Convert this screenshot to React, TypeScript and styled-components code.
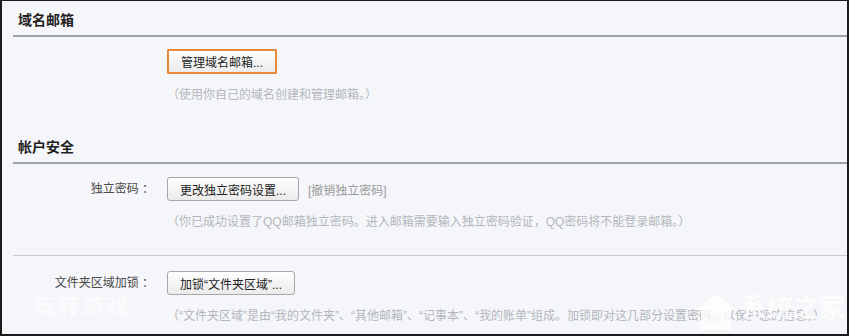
import * as React from 'react'
import styled, { createGlobalStyle } from 'styled-components'

const GlobalStyle = createGlobalStyle`
    body {
        margin: 0;
        font-family: 'Liberation Sans', 'Noto Sans CJK SC', sans-serif;
        font-size: 12px;
        color: #333;
    }
`

const Frame = styled.div`
    position: relative;
    box-sizing: border-box;
    width: 849px;
    height: 336px;
    overflow: hidden;
    background: #f5f6f9;
    border-style: solid;
    border-color: #1b1b1b;
    border-width: 1px 2px 2px 2px;
    padding-top: 9px;
`

const SectionTitle = styled.div`
    margin-left: 11px;
    padding: 0 0 5px 5px;
    font-size: 14px;
    font-weight: bold;
    line-height: 20px;
    color: #1f1f1f;
    border-bottom: 2px solid #a1a5ab;
    box-shadow: 0 1px 0 #eef1f7;
`

const SectionBody = styled.div<{ top: number; bottom: number }>`
    padding: ${p => p.top}px 0 ${p => p.bottom}px 0;
`

const Row = styled.div`
    display: grid;
    grid-template-columns: 152px auto;
    column-gap: 13px;
    align-items: center;
`

const Label = styled.div`
    text-align: right;
    color: #4a4a4a;
    line-height: 24px;
`

const Controls = styled.div`
    display: flex;
    align-items: center;
    gap: 9px;
`

const Button = styled.button<{ focused?: boolean }>`
    box-sizing: border-box;
    height: ${p => p.focused ? 25 : 24}px;
    padding: 0 12px;
    font-family: inherit;
    font-size: 12px;
    color: #222;
    background: linear-gradient(#fefefe, #ebebeb);
    border: ${p => p.focused ? '2px solid #e8893b' : '1px solid #a6a8ab'};
    border-radius: ${p => p.focused ? 1 : 3}px;
    cursor: pointer;
`

const Link = styled.span`
    color: #9a9a9a;
`

const Hint = styled.div`
    grid-column: 2;
    margin-top: 12px;
    line-height: 18px;
    color: #b3b7bc;
    white-space: nowrap;
`

const Divider = styled.div`
    margin-left: 11px;
    border-top: 1px solid #c7cacf;
    box-shadow: 0 2px 0 #eef2f8;
`

const WatermarkLeft = styled.div`
    position: absolute;
    left: 32px;
    top: 291px;
    font-family: 'Noto Sans CJK SC', sans-serif;
    font-size: 22px;
    line-height: 24px;
    font-weight: bold;
    letter-spacing: 2px;
    color: rgba(255, 255, 255, 0.6);
`

const WatermarkRight = styled.div`
    position: absolute;
    right: 2px;
    top: 291px;
    display: flex;
    align-items: flex-start;
    gap: 2px;
    color: rgba(255, 255, 255, 0.75);
`

const BrandText = styled.div`
    display: flex;
    flex-direction: column;
    font-family: 'Noto Sans CJK SC', sans-serif;
    font-size: 26px;
    font-weight: bold;
    line-height: 28px;
    & small {
        font-family: 'Liberation Sans', sans-serif;
        font-size: 8px;
        line-height: 10px;
        letter-spacing: 1px;
        font-weight: normal;
        opacity: 0.7;
    }
`

export default function App() {
    return <>
        <GlobalStyle />
        <Frame>
            <SectionTitle>域名邮箱</SectionTitle>
            <SectionBody top={12} bottom={33}>
                <Row>
                    <Label />
                    <Controls>
                        <Button focused>管理域名邮箱...</Button>
                    </Controls>
                    <Hint>（使用你自己的域名创建和管理邮箱。）</Hint>
                </Row>
            </SectionBody>

            <SectionTitle>帐户安全</SectionTitle>
            <SectionBody top={13} bottom={24}>
                <Row>
                    <Label>独立密码 ：</Label>
                    <Controls>
                        <Button>更改独立密码设置...</Button>
                        <Link>[撤销独立密码]</Link>
                    </Controls>
                    <Hint>（你已成功设置了QQ邮箱独立密码。进入邮箱需要输入独立密码验证，QQ密码将不能登录邮箱。）</Hint>
                </Row>
            </SectionBody>

            <Divider />
            <SectionBody top={15} bottom={0}>
                <Row>
                    <Label>文件夹区域加锁 ：</Label>
                    <Controls>
                        <Button>加锁“文件夹区域”...</Button>
                    </Controls>
                    <Hint>（“文件夹区域”是由“我的文件夹”、“其他邮箱”、“记事本”、“我的账单”组成。加锁即对这几部分设置密码，以保护您的信息。）</Hint>
                </Row>
            </SectionBody>

            <WatermarkLeft>玩转游戏</WatermarkLeft>
            <WatermarkRight>
                <svg width='46' height='40' viewBox='0 0 46 40'>
                    <path d='M23 2 L44 18 L38 18 L38 38 L8 38 L8 18 L2 18 Z' fill='currentColor' />
                    <rect x='17' y='22' width='12' height='10' fill='#f5f6f9' opacity='0.6' />
                </svg>
                <BrandText>
                    系统之家
                    <small>XITONGZHIJIA.NET</small>
                </BrandText>
            </WatermarkRight>
        </Frame>
    </>
}
